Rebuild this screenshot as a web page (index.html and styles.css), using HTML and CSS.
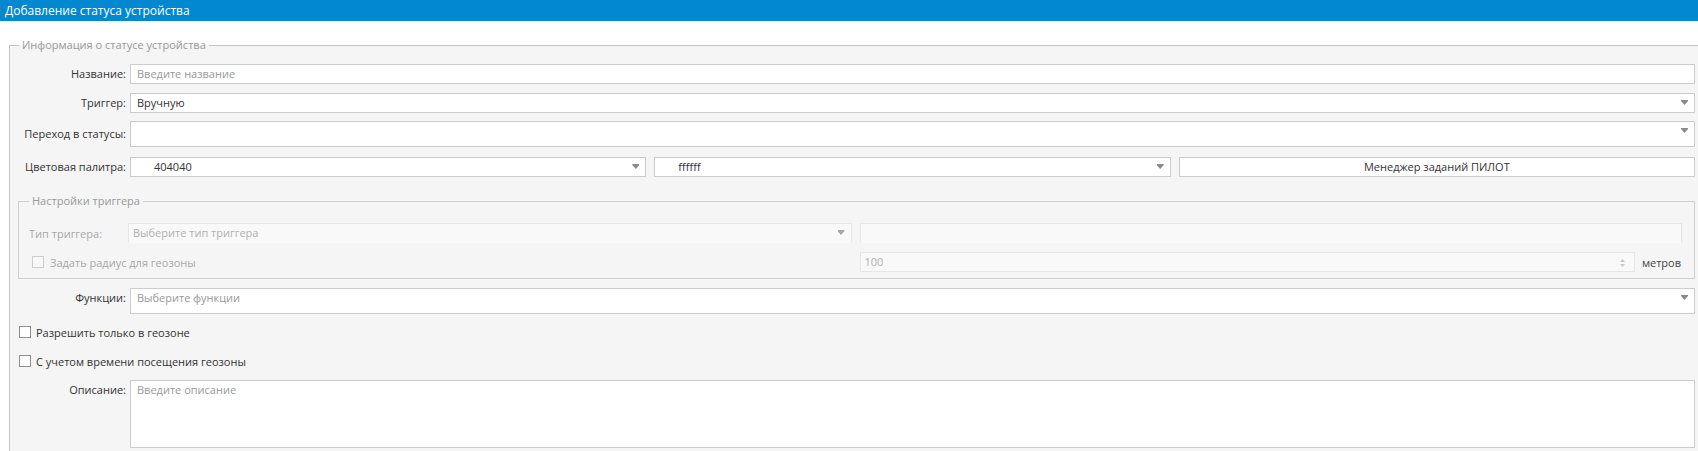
FILE: index.html
```html
<!DOCTYPE html>
<html lang="ru">
<head>
	<meta charset="UTF-8">
	<title>Добавление статуса устройства</title>
	<link rel="stylesheet" href="styles.css">
</head>
<body>
	<div class="titlebar">Добавление статуса устройства</div>
	<div class="page">
		<fieldset class="group">
			<legend>Информация о статусе устройства</legend>
			<div class="form">
				<div class="row gap9">
					<span class="caption">Название:</span>
					<div class="field"><span class="placeholder">Введите название</span></div>
				</div>
				<div class="row gap8">
					<span class="caption">Триггер:</span>
					<div class="field select">Вручную</div>
				</div>
				<div class="row gap10 middle">
					<span class="caption">Переход в статусы:</span>
					<div class="field select tall"></div>
				</div>
				<div class="row gap17">
					<span class="caption">Цветовая палитра:</span>
					<div class="palette">
						<div class="field select swatch">404040</div>
						<div class="field select swatch">ffffff</div>
						<div class="field button">Менеджер заданий ПИЛОТ</div>
					</div>
				</div>

				<fieldset class="group inner">
					<legend>Настройки триггера</legend>
					<div class="form">
						<div class="pair gap9">
							<div class="half">
								<span class="caption-off">Тип триггера:</span>
								<div class="field select off open">Выберите тип триггера</div>
							</div>
							<div class="field off open"></div>
						</div>
						<div class="pair">
							<div class="half">
								<span class="check off"><span class="box"></span>Задать радиус для геозоны</span>
							</div>
							<div class="half">
								<div class="field off">100
									<svg class="spin" width="5" height="8" viewBox="0 0 5 8"><path d="M0 3h5L2.5 0z M0 5h5L2.5 8z" fill="#c8c8c8"/></svg>
								</div>
								<span class="unit">метров</span>
							</div>
						</div>
					</div>
				</fieldset>

				<div class="row gap8">
					<span class="caption">Функции:</span>
					<div class="field select tall"><span class="placeholder">Выберите функции</span></div>
				</div>
				<div class="row gap9 line">
					<span class="check"><span class="box"></span>Разрешить только в геозоне</span>
				</div>
				<div class="row gap9 line">
					<span class="check"><span class="box"></span>С учетом времени посещения геозоны</span>
				</div>
				<div class="row">
					<span class="caption">Описание:</span>
					<div class="field area"><span class="placeholder">Введите описание</span></div>
				</div>
			</div>
		</fieldset>
	</div>
</body>
</html>
```

FILE: styles.css
```css
html, body {
	margin: 0;
	overflow: hidden;
}
body {
	width: 1698px;
	font-family: "Open Sans", "Liberation Sans", sans-serif;
	font-size: 11px;
	color: #333;
	background: #fff;
}
.titlebar {
	height: 21px;
	line-height: 21px;
	padding-left: 5px;
	font-size: 12px;
	color: #fff;
	background: #0288d1;
}
.page {
	padding-top: 17px;
}

/* fieldsets */
fieldset.group {
	margin: 0 -7px 0 9px;
	padding: 12px 9px 20px 9px;
	border: 1px solid #c4c4c4;
	background: #f5f5f5;
	min-width: 0;
}
fieldset.group legend {
	padding: 0 3px;
	line-height: 14px;
	color: #999;
}
fieldset.inner {
	margin: 0 0 9px -1px;
	padding: 15px 12px 6px 10px;
	border-color: #cfcfcf;
}
.form {
	display: flex;
	flex-direction: column;
}

/* rows */
.row {
	display: flex;
	align-items: flex-start;
}
.row.line {
	height: 20px;
	align-items: center;
}
.gap8 { margin-bottom: 8px; }
.gap9 { margin-bottom: 9px; }
.gap10 { margin-bottom: 10px; }
.gap17 { margin-bottom: 17px; }
.caption {
	width: 107px;
	margin-right: 4px;
	text-align: right;
	line-height: 20px;
	white-space: nowrap;
}
.row.middle .caption {
	line-height: 26px;
}

/* inputs */
.field {
	position: relative;
	box-sizing: border-box;
	flex: 1;
	min-width: 0;
	height: 20px;
	padding: 0 6px;
	border: 1px solid #ccc;
	background: #fff;
	line-height: 18px;
	white-space: nowrap;
	overflow: hidden;
}
.field.tall { height: 26px; }
.field.area { height: 68px; }
.placeholder { color: #999; }
.select::after {
	content: "";
	position: absolute;
	top: 6px;
	right: 6px;
	width: 7px;
	height: 5px;
	background: #8a8a8a;
	clip-path: polygon(0 0, 100% 0, 100% 20%, 50% 100%, 0 20%);
}
.palette {
	flex: 1;
	display: grid;
	grid-template-columns: 1fr 1fr 1fr;
	gap: 8px;
}
.swatch { padding-left: 23px; }
.button { text-align: center; }

/* disabled part */
.pair {
	display: grid;
	grid-template-columns: 1fr 1fr;
	gap: 8px;
	height: 20px;
}
.half {
	display: flex;
	align-items: center;
	min-width: 0;
}
.caption-off {
	width: 99px;
	color: #a8a8a8;
	white-space: nowrap;
}
.field.off {
	padding-left: 4px;
	background: #f9f9f9;
	border-color: #e6e6e6;
	color: #b0b0b0;
}
.field.off.open { border-bottom-color: transparent; }
.field.off.select::after { background: #a6a6a6; }
.spin {
	position: absolute;
	top: 6px;
	right: 9px;
}
.unit {
	margin-left: 7px;
	margin-right: 1px;
	color: #444;
	white-space: nowrap;
}

/* checkboxes */
.check {
	display: flex;
	align-items: center;
	white-space: nowrap;
}
.box {
	box-sizing: border-box;
	width: 12px;
	height: 12px;
	margin-right: 5px;
	border: 1px solid #8e8e8e;
	background: #fff;
}
.check.off {
	margin-left: 3px;
	color: #a8a8a8;
}
.check.off .box {
	border-color: #cdcdcd;
	background: #f9f9f9;
	margin-right: 6px;
}
```
